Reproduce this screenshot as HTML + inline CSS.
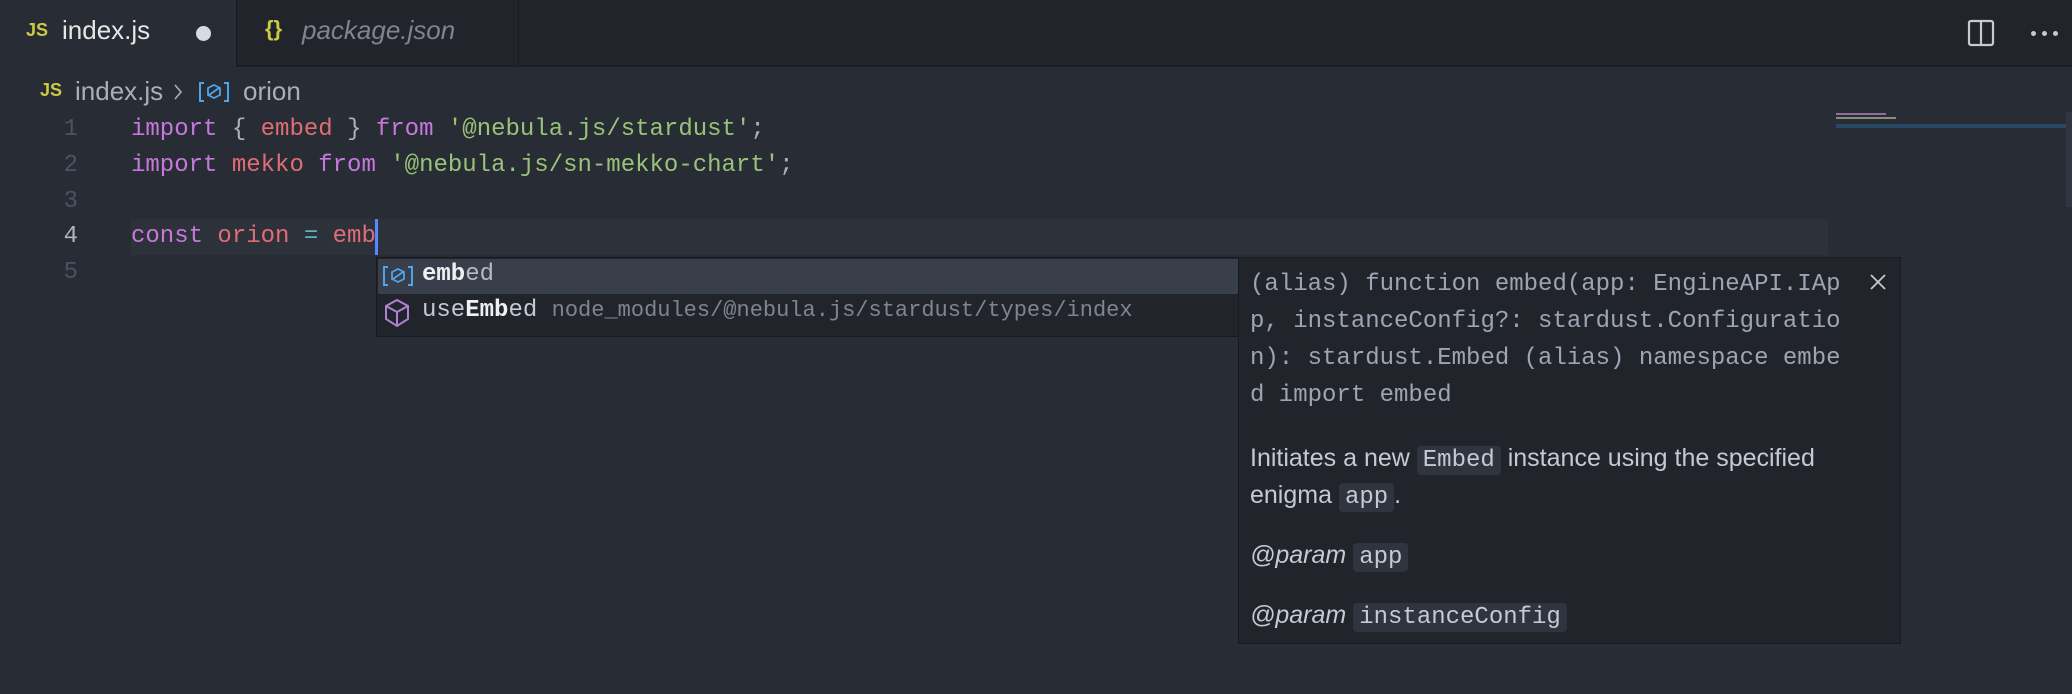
<!DOCTYPE html>
<html><head><meta charset="utf-8"><style>
*{margin:0;padding:0;box-sizing:border-box}
body{width:2072px;height:694px;background:#282c34;overflow:hidden;position:relative;font-family:"Liberation Sans",sans-serif;color:#abb2bf}
.abs{position:absolute;white-space:pre}
.mono{font-family:"Liberation Mono",monospace;font-size:24px}
.tabs{position:absolute;left:0;top:0;width:2072px;height:67px;background:#21252b;border-bottom:2px solid #1b1e23}
.tab1{position:absolute;left:0;top:0;width:236px;height:67px;background:#282c34}
.tab2{position:absolute;left:236px;top:0;width:283px;height:65px;background:#21252b;border-right:1px solid #181a1f;border-left:1px solid #181a1f}
.k{color:#c678dd}.v{color:#e06c75}.s{color:#98c379}.p{color:#abb2bf}.o{color:#56b6c2}
.ln{color:#4b5263;width:50px;text-align:right;left:28px}
code.c{font-family:"Liberation Mono",monospace;background:#2f343e;border-radius:4px;padding:1px 6px;font-size:24px;color:#c4c9d2}
</style></head><body>
<div class="tabs"></div>
<div class="tab1"></div>
<div class="tab2"></div>
<div class="abs" style="left:26px;top:20px;color:#cbcb41;font-weight:bold;font-size:18px">JS</div>
<div class="abs" style="left:62px;top:15px;color:#e6e6e6;font-size:26px">index.js</div>
<div class="abs" style="left:196px;top:26px;width:15px;height:15px;border-radius:50%;background:#d7dae0"></div>
<div class="abs" style="left:265px;top:16px;color:#cbcb41;font-size:22px;font-weight:bold">{}</div>
<div class="abs" style="left:302px;top:15px;color:#7f848e;font-size:26px;font-style:italic">package.json</div>
<svg class="abs" style="left:1967px;top:19px" width="28" height="28" viewBox="0 0 28 28"><rect x="2" y="2" width="24" height="24" rx="2" fill="none" stroke="#c5c9d0" stroke-width="2.2"/><line x1="14" y1="2" x2="14" y2="26" stroke="#c5c9d0" stroke-width="2.2"/></svg>
<div class="abs" style="left:2031px;top:31px;width:5px;height:5px;border-radius:50%;background:#c5c9d0"></div>
<div class="abs" style="left:2042px;top:31px;width:5px;height:5px;border-radius:50%;background:#c5c9d0"></div>
<div class="abs" style="left:2053px;top:31px;width:5px;height:5px;border-radius:50%;background:#c5c9d0"></div>

<div class="abs" style="left:40px;top:80px;color:#cbcb41;font-weight:bold;font-size:18px">JS</div>
<div class="abs" style="left:75px;top:76px;color:#a9afba;font-size:26px">index.js</div>
<svg class="abs" style="left:172px;top:82px" width="12" height="20" viewBox="0 0 12 20"><path d="M3 3 L9 10 L3 17" fill="none" stroke="#a9afba" stroke-width="1.6"/></svg>
<svg class="abs" style="left:198px;top:80px" width="32" height="24" viewBox="0 0 32 24"><path d="M6 3H2V21H6M26 3H30V21H26" fill="none" stroke="#4fa3e8" stroke-width="2"/><path d="M10 8L16 5L22 8V15L16 18L10 15Z M11 15L21 8" fill="none" stroke="#4fa3e8" stroke-width="1.8"/></svg>
<div class="abs" style="left:243px;top:76px;color:#a9afba;font-size:26px">orion</div>

<div class="abs" style="left:131px;top:219px;width:1697px;height:36px;background:#2c313a"></div>
<div class="abs mono ln" style="top:116px">1</div>
<div class="abs mono ln" style="top:152px">2</div>
<div class="abs mono ln" style="top:188px">3</div>
<div class="abs mono ln" style="top:223px;color:#b0b6c0">4</div>
<div class="abs mono ln" style="top:259px">5</div>
<div class="abs mono" style="left:131px;top:116px"><span class="k">import</span> <span class="p">{</span> <span class="v">embed</span> <span class="p">}</span> <span class="k">from</span> <span class="s">'@nebula.js/stardust'</span><span class="p">;</span></div>
<div class="abs mono" style="left:131px;top:152px"><span class="k">import</span> <span class="v">mekko</span> <span class="k">from</span> <span class="s">'@nebula.js/sn-mekko-chart'</span><span class="p">;</span></div>
<div class="abs mono" style="left:131px;top:223px"><span class="k">const</span> <span class="v">orion</span> <span class="o">=</span> <span class="v">emb</span></div>
<div class="abs" style="left:375px;top:219px;width:3px;height:36px;background:#528bff"></div>

<!-- minimap -->
<div class="abs" style="left:1836px;top:113px;width:50px;height:2px;background:#8a6fa0"></div>
<div class="abs" style="left:1836px;top:117px;width:60px;height:2px;background:#8a8f6f"></div>
<div class="abs" style="left:1836px;top:124px;width:232px;height:4px;background:#264a66"></div>
<div class="abs" style="left:2066px;top:112px;width:6px;height:95px;background:#303540"></div>

<!-- suggest -->
<div class="abs" style="left:376px;top:257px;width:863px;height:80px;background:#21252b;border:1px solid #181a1f"></div>
<div class="abs" style="left:378px;top:259px;width:860px;height:35px;background:#383e4a"></div>
<svg class="abs" style="left:382px;top:264px" width="32" height="24" viewBox="0 0 32 24"><path d="M6 3H2V21H6M26 3H30V21H26" fill="none" stroke="#4fa3e8" stroke-width="2"/><path d="M10 8L16 5L22 8V15L16 18L10 15Z M11 15L21 8" fill="none" stroke="#4fa3e8" stroke-width="1.8"/></svg>
<div class="abs mono" style="left:422px;top:261px;color:#d7dae0"><b style="color:#eef0f3">emb</b><span style="color:#b5bac3">ed</span></div>
<svg class="abs" style="left:382px;top:297px" width="30" height="32" viewBox="0 0 30 32"><path d="M15 3L26 9V22L15 29L4 22V9Z M4 9L15 15L26 9 M15 15V29" fill="none" stroke="#b180d7" stroke-width="2"/></svg>
<div class="abs mono" style="left:422px;top:297px;color:#c4c9d2">use<b style="color:#eef0f3">Emb</b>ed <span style="color:#7f848e;font-size:22px">node_modules/@nebula.js/stardust/types/index</span></div>

<!-- hover -->
<div class="abs" style="left:1238px;top:257px;width:663px;height:387px;background:#21252b;border:1px solid #181a1f"></div>
<div class="abs mono" style="left:1250px;top:266px;color:#9da5b4;line-height:37px">(alias) function embed(app: EngineAPI.IAp
p, instanceConfig?: stardust.Configuratio
n): stardust.Embed (alias) namespace embe
d import embed</div>
<svg class="abs" style="left:1869px;top:273px" width="18" height="18" viewBox="0 0 18 18"><path d="M2 2L16 16M16 2L2 16" stroke="#c5c9d0" stroke-width="1.8"/></svg>
<div class="abs" style="left:1250px;top:444px;font-size:25px;color:#c4c9d2">Initiates a new <code class="c">Embed</code> instance using the specified</div>
<div class="abs" style="left:1250px;top:481px;font-size:25px;color:#c4c9d2">enigma <code class="c">app</code>.</div>
<div class="abs" style="left:1250px;top:541px;font-size:25px;color:#c4c9d2"><i>@param</i> <code class="c">app</code></div>
<div class="abs" style="left:1250px;top:601px;font-size:25px;color:#c4c9d2"><i>@param</i> <code class="c">instanceConfig</code></div>
</body></html>
